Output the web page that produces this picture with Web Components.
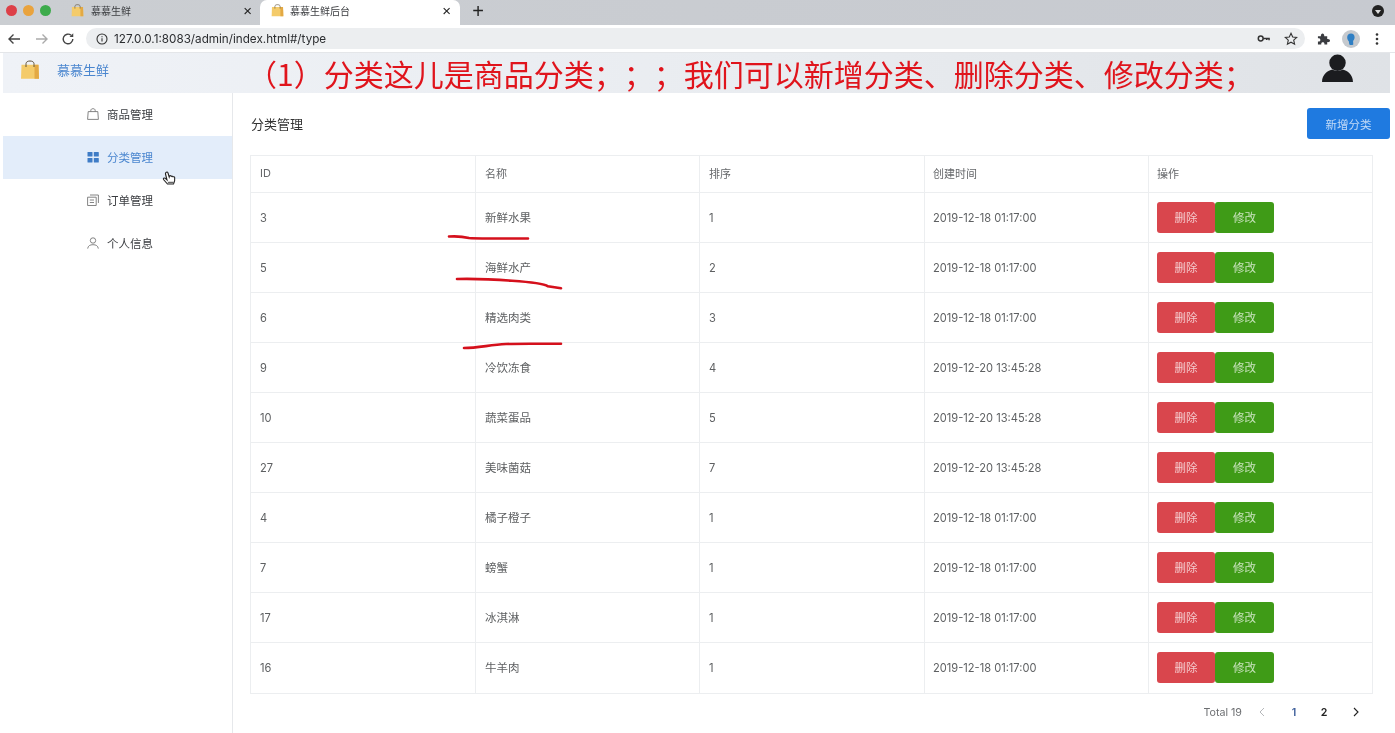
<!DOCTYPE html>
<html lang="zh-CN"><head><meta charset="utf-8"><title>慕慕生鲜后台</title>
<style>
html,body{margin:0;height:733px;overflow:hidden;background:#fff;font-family:"Inter","Noto Sans CJK SC",sans-serif;}
body{display:flex;flex-direction:column;position:relative;filter:blur(.35px)}
</style></head>
<body>
<browser-chrome></browser-chrome>
<app-header></app-header>
<app-shell>
  <side-nav slot="nav"></side-nav>
  <type-page slot="main"></type-page>
</app-shell>
<ink-marks></ink-marks>
<script>
const FF='"Inter","Noto Sans CJK SC",sans-serif';
const BAG=(s)=>`<svg width="${s}" height="${s}" viewBox="0 0 20 20"><path d="M6 7V3.600C6 2 7.800 1 10 1s4 1 4 2.600V7" fill="none" stroke="#5f5038" stroke-width="1"/><path d="M1.500 4.800h17l.5 14H1z" fill="#f4cb6a"/><path d="M14.500 4.800h4l.5 14h-4.500z" fill="#e3a944"/><path d="M6 4.800V7M14 4.800V7" stroke="#5f5038" stroke-width="1"/></svg>`;
function def(name,html){customElements.define(name,class extends HTMLElement{constructor(){super();this.attachShadow({mode:'open'}).innerHTML=typeof html==='function'?html(this):html;}});}

def('browser-tab',el=>{const active=el.hasAttribute('active');return `<style>
:host{display:flex;align-items:center;box-sizing:border-box;width:200px;height:100%;padding:0 9px 4px 11px;gap:6px;font:10px ${FF};color:#3b3d40;${active?'background:#fff;border-radius:7px 7px 0 0;':''}}
span{flex:1}i{font:normal 15px "Liberation Sans",sans-serif;color:#222;line-height:1}
</style>${BAG(13)}<span><slot></slot></span><i>×</i>`});

def('browser-chrome',`<style>
:host{display:block;flex:none}
.tabs{height:25px;background:linear-gradient(90deg,#cbced2,#c7cad0);display:flex;align-items:stretch;box-sizing:border-box}
.lights{display:flex;align-items:center;gap:6px;width:60px;padding:0 0 5px 6px;box-sizing:border-box;flex:none}
.lights b{width:11px;height:11px;border-radius:50%}
.plus{width:36px;text-align:center;font:20px "Liberation Sans",sans-serif;color:#222;line-height:23px}
.sp{flex:1}
.dl{align-self:center;margin:0 11px 3px 0;width:12px;height:12px;border-radius:50%;background:#222;position:relative}
.dl::after{content:"";position:absolute;left:3px;top:4.5px;border:3px solid transparent;border-top:4px solid #ddd;border-bottom:0}
.bar{height:28px;background:#fff;display:flex;align-items:center;box-sizing:border-box;border-bottom:1px solid #e4e6e9}
.nav{display:flex;width:86px;padding-left:6px;box-sizing:border-box;gap:12px;align-items:center;flex:none}
.url{width:1219px;height:21px;background:#eceef0;border-radius:11px;display:flex;align-items:center;padding:0 7px 0 10px;box-sizing:border-box;gap:6px;font:11.7px "Inter",sans-serif;color:#2b2d30;flex:none}
.url span{flex:1}
.ext{display:flex;align-items:center;gap:12px;padding-left:12px}
</style>
<div class="tabs">
 <div class="lights"><b style="background:#dd4048"></b><b style="background:#e9a33d"></b><b style="background:#3cab4b"></b></div>
 <browser-tab style="gap:7px;padding-right:8px">慕慕生鲜</browser-tab>
 <browser-tab active>慕慕生鲜后台</browser-tab>
 <div class="plus">+</div><div class="sp"></div><div class="dl"></div>
</div>
<div class="bar">
 <div class="nav">
  <svg width="16" height="16" viewBox="0 0 16 16" fill="none" stroke="#444" stroke-width="1.4"><path d="M14 8H3M7.500 3.500 3 8l4.500 4.500"/></svg>
  <svg width="16" height="16" viewBox="0 0 16 16" fill="none" stroke="#aaa" stroke-width="1.4"><path d="M2 8h11M8.500 3.500 13 8l-4.500 4.500"/></svg>
  <svg width="14" height="14" viewBox="0 0 16 16" fill="none" stroke="#444" stroke-width="1.6" style="margin-left:-1px"><path d="M13.500 8A5.500 5.500 0 1 1 11.600 3.800"/><path d="M14 1.500v4.300H9.700" fill="#444" stroke="none"/></svg>
 </div>
 <div class="url">
  <svg width="12" height="12" viewBox="0 0 12 12" fill="none" stroke="#333" stroke-width="1.1"><circle cx="6" cy="6" r="5"/><path d="M6 5.200v3.300M6 3.200v1"/></svg>
  <span>127.0.0.1:8083/admin/index.html#/type</span>
  <svg width="13" height="13" viewBox="0 0 14 14" fill="none" stroke="#333" stroke-width="1.6"><circle cx="4" cy="7" r="2.600"/><path d="M6.600 7H13v2M10.500 7v1.600"/></svg>
  <svg style="margin-left:8px" width="14" height="14" viewBox="0 0 14 14" fill="none" stroke="#333" stroke-width="1.1"><path d="M7 1.300 8.700 5l4 .5-3 2.700.9 4L7 10.200 3.400 12.200l.9-4-3-2.700 4-.5z"/></svg>
 </div>
 <div class="ext">
  <svg width="13" height="13" viewBox="0 0 14 14" fill="#3a3c40"><path d="M1 4.500h3.200C4 2.500 5 1.500 6 1.500s2 1 1.800 3H11v3c2-.3 3 .6 3 1.700s-1 2-3 1.700V13.500H8c.3-2-.7-2.500-1.700-2.500S4.300 11.500 4.600 13.500H1v-3.200c1.800.2 2.600-.6 2.600-1.800S2.800 6.500 1 6.700z"/></svg>
  <svg width="18" height="18" viewBox="0 0 18 18"><circle cx="9" cy="9" r="9" fill="#c5c9ce"/><path d="M9 3.500c2.300 0 3.600 1.700 3.600 3.800 0 1.800-.9 3-1.500 3.700l.2 3.500c-1 .8-3 .8-4 0l-.5-3.200C5.800 10.400 5.200 9 5.200 7.300 5.200 5.200 6.700 3.500 9 3.500z" fill="#2f7fc4"/></svg>
  <svg style="margin-left:3px" width="4" height="12" viewBox="0 0 4 12" fill="#333"><circle cx="2" cy="1.500" r="1.300"/><circle cx="2" cy="6" r="1.300"/><circle cx="2" cy="10.500" r="1.300"/></svg>
 </div>
</div>`);

def('app-header',`<style>
:host{display:block;flex:none;height:40px;margin:0 5px 0 3px;background:linear-gradient(90deg,#eff2f7,#e9ecf0 55%,#dfe2e6)}
.in{display:flex;align-items:center;height:100%;box-sizing:border-box;padding:0 36px 0 17px}
.in>svg:first-of-type{margin-top:-6px}
.brand{font:13px ${FF};color:#4a86cf;margin-left:17px;width:190px;flex:none;margin-top:-8px}
h1{margin:0;flex:1;font:400 30px "Noto Sans CJK SC",sans-serif;color:#e0141c;white-space:nowrap;margin-top:-1px;line-height:40px;text-spacing-trim:space-all;font-feature-settings:"palt" 0,"halt" 0,"chws" 0;min-width:0}
.in>svg.me{flex:none;margin-top:-10px}
</style><div class="in">
${BAG(20)}<div class="brand">慕慕生鲜</div>
<h1>（1）分类这儿是商品分类；；；我们可以新增分类、删除分类、修改分类；</h1>
<svg class="me" width="33" height="29" viewBox="0 0 34 30" fill="#1b1c1f"><circle cx="17" cy="9" r="8.500"/><path d="M1 29c0-8 6-12 11-13 3 2 7 2 10 0 5 1 11 5 11 13z"/></svg>
</div>`);

def('app-shell',`<style>
:host{display:flex;flex:1;min-height:0}
::slotted([slot=nav]){flex:none}
::slotted([slot=main]){flex:1;min-width:0}
</style><slot name="nav"></slot><slot name="main"></slot>`);

def('nav-item',el=>{const a=el.hasAttribute('active');return `<style>
:host{display:flex;align-items:center;height:43px;box-sizing:border-box;padding:0 0 2px 84px;margin-left:3px;gap:8px;font:11.5px ${FF};color:${a?'#4a86cf':'#3a3c40'};${a?'background:#e3edfa;':''}}
</style><slot name="ic"></slot><slot></slot>`});

def('side-nav',`<style>
:host{display:block;width:233px;box-sizing:border-box;border-right:1px solid #e6e8eb;height:640px}
svg{width:12px;height:12px;display:block}
</style>
<nav-item><svg slot="ic" viewBox="0 0 12 12" fill="none" stroke="#777" stroke-width=".9"><path d="M1.200 3.600h9.600l.6 7.800H.6zM3.800 3.600V2.400C3.800 1.300 4.800.7 6 .7s2.200.6 2.200 1.700v1.200"/></svg>商品管理</nav-item>
<nav-item active><svg slot="ic" viewBox="0 0 12 12" fill="#3f7cc6"><rect x=".5" y="1" width="5" height="4.600" rx=".6"/><rect x="6.800" y="1" width="5" height="4.600" rx=".6"/><rect x=".5" y="6.900" width="5" height="4.600" rx=".6"/><rect x="6.800" y="6.900" width="5" height="4.600" rx=".6"/></svg>分类管理</nav-item>
<nav-item><svg slot="ic" viewBox="0 0 12 12" fill="none" stroke="#777" stroke-width=".9"><path d="M.6 3.200h8.600v8.300H.6zM3 1h8.400v8M2.800 6h4.200M2.800 8.500h4.200"/></svg>订单管理</nav-item>
<nav-item><svg slot="ic" viewBox="0 0 12 12" fill="none" stroke="#777" stroke-width=".9"><circle cx="6" cy="3.500" r="2.700"/><path d="M.7 11.600C1 8.800 3 7.700 6 7.700s5 1.100 5.300 3.900"/></svg>个人信息</nav-item>
`);

def('act-btn',el=>{const d=el.getAttribute('kind')==='del';return `<style>
:host{display:flex;align-items:center;justify-content:center;width:${d?58:59}px;height:31px;box-sizing:border-box;padding-bottom:1px;background:${d?'#d9464d':'#3f9b17'};border-radius:3px;color:rgba(255,255,255,.72);font:11.5px ${FF}}
</style><slot></slot>`});

const CELLS=`display:flex;align-items:center;padding-left:9px;border-right:1px solid #eceef0;box-sizing:border-box`;
def('table-row',el=>{
 const [id,n,o,t]=el.dataset.v.split('|');return `<style>
:host{display:grid;grid-template-columns:225px 224px 225px 224px 1fr;height:50px;border-bottom:1px solid #eceef0;box-sizing:border-box;font:11.1px ${FF};color:#5e6062}
:host(:last-child){border-bottom:0}
div{${CELLS}}
div:nth-of-type(2){font-size:11.5px;padding-bottom:2px}
div:nth-of-type(4){padding-left:8px}
div:nth-of-type(5){border-right:0;padding:0 0 1px 8px}
</style><div>${id}</div><div>${n}</div><div>${o}</div><div>${t}</div><div><act-btn kind="del">删除</act-btn><act-btn>修改</act-btn></div>`});

def('table-head',`<style>
:host{display:grid;grid-template-columns:225px 224px 225px 224px 1fr;height:37px;border-bottom:1px solid #eceef0;box-sizing:border-box;font:11px ${FF};color:#66686b}
div{${CELLS};padding-bottom:2px}
div:nth-of-type(4){padding-left:8px}
div:nth-of-type(5){border-right:0;padding-left:8px}
</style><div>ID</div><div>名称</div><div>排序</div><div>创建时间</div><div>操作</div>`);

def('data-table',`<style>
:host{display:block;border:1px solid #eceef0;margin-right:17px;box-sizing:border-box;height:539px}
</style><table-head></table-head><slot></slot>`);

def('page-bar',`<style>
:host{display:flex;align-items:center;justify-content:flex-end;height:38px;box-sizing:border-box;padding-bottom:2px;margin-right:17px;font:10.700px ${FF};color:#6d6f72}
span{display:block;text-align:center}
.t{margin-right:16px}
.n{width:30px;font-weight:600;color:#222}
svg{display:block;flex:none}
</style>
<span class="t">Total 19</span>
<svg style="margin-right:13px" width="8" height="10" viewBox="0 0 8 10" fill="none" stroke="#b5b7ba"><path d="M6 1 2 5l4 4"/></svg>
<span class="n" style="color:#3d5e9a">1</span><span class="n">2</span>
<svg style="margin:0 13px" width="8" height="10" viewBox="0 0 8 10" fill="none" stroke="#222" stroke-width="1.100"><path d="m2 1 4 4-4 4"/></svg>`);

const ROWS=[['3','新鲜水果','1','2019-12-18 01:17:00'],['5','海鲜水产','2','2019-12-18 01:17:00'],['6','精选肉类','3','2019-12-18 01:17:00'],['9','冷饮冻食','4','2019-12-20 13:45:28'],['10','蔬菜蛋品','5','2019-12-20 13:45:28'],['27','美味菌菇','7','2019-12-20 13:45:28'],['4','橘子橙子','1','2019-12-18 01:17:00'],['7','螃蟹','1','2019-12-18 01:17:00'],['17','冰淇淋','1','2019-12-18 01:17:00'],['16','牛羊肉','1','2019-12-18 01:17:00']];
def('type-page',`<style>
:host{display:block;padding:15px 5px 0 17px;box-sizing:border-box;min-height:0}
.top{display:flex;align-items:center;justify-content:space-between;height:31px;margin-bottom:16px}
h2{margin:0 0 0 1px;font:400 13px ${FF};color:#333}
.add{display:flex;align-items:center;justify-content:center;width:83px;height:31px;background:#1f7ae0;border-radius:3px;color:rgba(255,255,255,.72);font:11.5px ${FF}}
</style>
<div class="top"><h2>分类管理</h2><div class="add">新增分类</div></div>
<data-table>${ROWS.map(r=>`<table-row data-v="${r.join('|')}"></table-row>`).join('')}</data-table>
<page-bar></page-bar>`);

def('ink-marks',`<style>
:host{position:absolute;left:0;top:0;width:1395px;height:733px;pointer-events:none;display:block}
svg{position:absolute;left:0;top:0}
</style>
<svg width="1395" height="733" fill="none" stroke="#d5101c" stroke-width="2.600" stroke-linecap="round">
<path d="M449 236.500c8-.5 14 0 20 1.500 12 .8 40 .5 59 .5"/>
<path d="M457 279c18-.5 38 .5 55 1.800 18 1.200 32 3 36 5.500l13 2"/>
<path d="M464 348c14 0 25-3 42-4 20-.5 38 0 55-.3"/>
<g transform="translate(162 171)"><path d="M4 1.500c.8-.8 1.700-.5 2 .5l1.200 4 .3-1c.8-.6 1.500-.3 1.800.4.600-.5 1.400-.2 1.700.4.700-.3 1.500 0 1.700.9.200 1.500 0 4-1.200 6.300H5.500L1.500 8.500c-.5-1 .5-2 1.500-1.300L5 9 3.500 3c-.2-.6 0-1.100.5-1.500z" fill="#fff" stroke="#222" stroke-width="1.100"/><path d="M6.500 11.500h5" stroke="#666" stroke-width="1.500"/></g>
</svg>`);
</script>
</body></html>
